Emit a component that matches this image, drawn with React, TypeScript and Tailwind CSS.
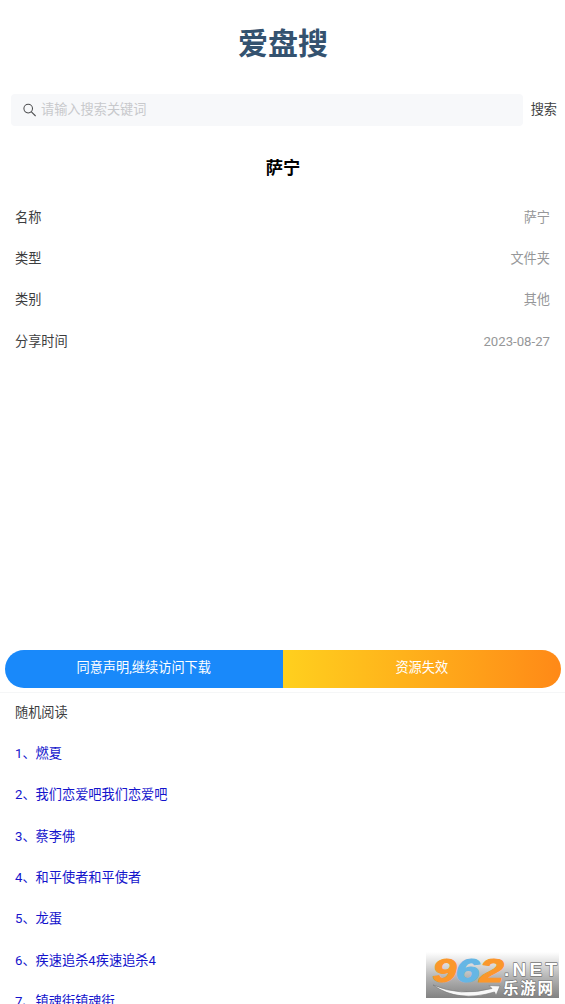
const details = [
  ['名称', '萨宁'],
  ['类型', '文件夹'],
  ['类别', '其他'],
  ['分享时间', '2023-08-27'],
];

const articles = [
  '燃夏',
  '我们恋爱吧我们恋爱吧',
  '蔡李佛',
  '和平使者和平使者',
  '龙蛋',
  '疾速追杀4疾速追杀4',
  '镇魂街镇魂街',
];

function SearchIcon() {
  return (
    <svg className="h-[14px] w-[14px] shrink-0" viewBox="0 0 14 14" fill="none" stroke="#4b4c4e" strokeWidth="1.05">
      <circle cx="5.2" cy="5.6" r="4.3" />
      <path d="M8.4 8.9 L12.6 13" />
    </svg>
  );
}

function Watermark() {
  return (
    <svg className="fixed left-[426px] top-[952px] h-[46px] w-[133px]" viewBox="0 0 133 46">
      <defs>
        <linearGradient id="plate" x1="0" y1="0" x2="0" y2="1">
          <stop offset="0" stopColor="#ffffff" />
          <stop offset="0.12" stopColor="#f0f0f0" />
          <stop offset="0.55" stopColor="#b4b4b4" />
          <stop offset="1" stopColor="#828282" />
        </linearGradient>
      </defs>
      <rect width="133" height="46" fill="url(#plate)" />
      <path d="M7 33 Q34 45 66 36.5 L63 33.5 L74 34 L70 43.5 L68.5 40 Q32 51 7 33Z" fill="#f8f8f8" stroke="#777" strokeWidth="0.6" />
      <g fontFamily="'Liberation Sans', sans-serif" fontWeight="700" paintOrder="stroke" strokeLinejoin="round">
        <g fontSize="33" fontStyle="italic" strokeWidth="1">
          <text x="6.5" y="30" textLength="24" lengthAdjust="spacingAndGlyphs" fill="#fb972b" stroke="#fb972b">9</text>
          <text x="29.5" y="30" textLength="24" lengthAdjust="spacingAndGlyphs" fill="#65b6e5" stroke="#65b6e5">6</text>
          <text x="53.5" y="30" textLength="24.5" lengthAdjust="spacingAndGlyphs" fill="#fb972b" stroke="#fb972b">2</text>
        </g>
        <text x="78" y="24" fontSize="19" textLength="53" fill="#fff" stroke="#777" strokeWidth="1.3">.NET</text>
      </g>
      <text x="77" y="42" fontSize="15.5" textLength="50" fontFamily="'Noto Sans CJK SC', sans-serif" fontWeight="700" fill="#fff" stroke="#777" strokeWidth="1.2" paintOrder="stroke">乐游网</text>
    </svg>
  );
}

export default function App() {
  return (
    <main className="flex h-[1004px] w-full flex-col overflow-hidden bg-white font-[Roboto,'Noto_Sans_CJK_SC',sans-serif] text-[13.2px] leading-[22px] text-[#3c3d3e]">
      <h1 className="mt-[22px] h-[44px] shrink-0 pl-[1px] text-center text-[30px] font-bold leading-[44px] text-[#34526f]">爱盘搜</h1>
      <div className="mt-[28px] flex h-8 shrink-0 items-center pl-[11px] pr-2">
        <div className="flex h-8 w-[512px] items-center gap-[5px] rounded-sm bg-[#f7f8fa] pl-3 text-[#c8c9cc]">
          <SearchIcon />
          <span className="-ml-px">请输入搜索关键词</span>
        </div>
        <button className="ml-auto">搜索</button>
      </div>
      <h2 className="mt-[29px] h-[26px] shrink-0 pl-[1px] text-center text-[17.3px] font-bold leading-[26px] text-black">萨宁</h2>
      <dl className="mt-[15.8px] shrink-0 px-[15px]">
        {details.map(([label, value]) => (
          <div key={label} className="flex h-[41.45px] items-center justify-between">
            <dt>{label}</dt>
            <dd className="text-[#969799]">{value}</dd>
          </div>
        ))}
      </dl>
      <div className="mt-[287.4px] flex h-[38px] shrink-0 pl-[5px] pr-1 text-white">
        <button className="h-full w-[277.5px] rounded-l-full bg-[#1989fa] pb-[2px]">同意声明,继续访问下载</button>
        <button className="h-full flex-1 rounded-r-full bg-linear-to-r from-[#ffd01e] to-[#ff8917] pb-[2px]">资源失效</button>
      </div>
      <section className="mt-1 shrink-0 border-t border-[#f5f6f7] px-[15px]">
        <h3 className="flex h-[40px] items-center">随机阅读</h3>
        <ul>
          {articles.map((title, index) => (
            <li key={title} className="flex h-[41.45px] items-center">
              <a className="text-[#1414cc]">{index + 1}、{title}</a>
            </li>
          ))}
        </ul>
      </section>
      <Watermark />
    </main>
  );
}
